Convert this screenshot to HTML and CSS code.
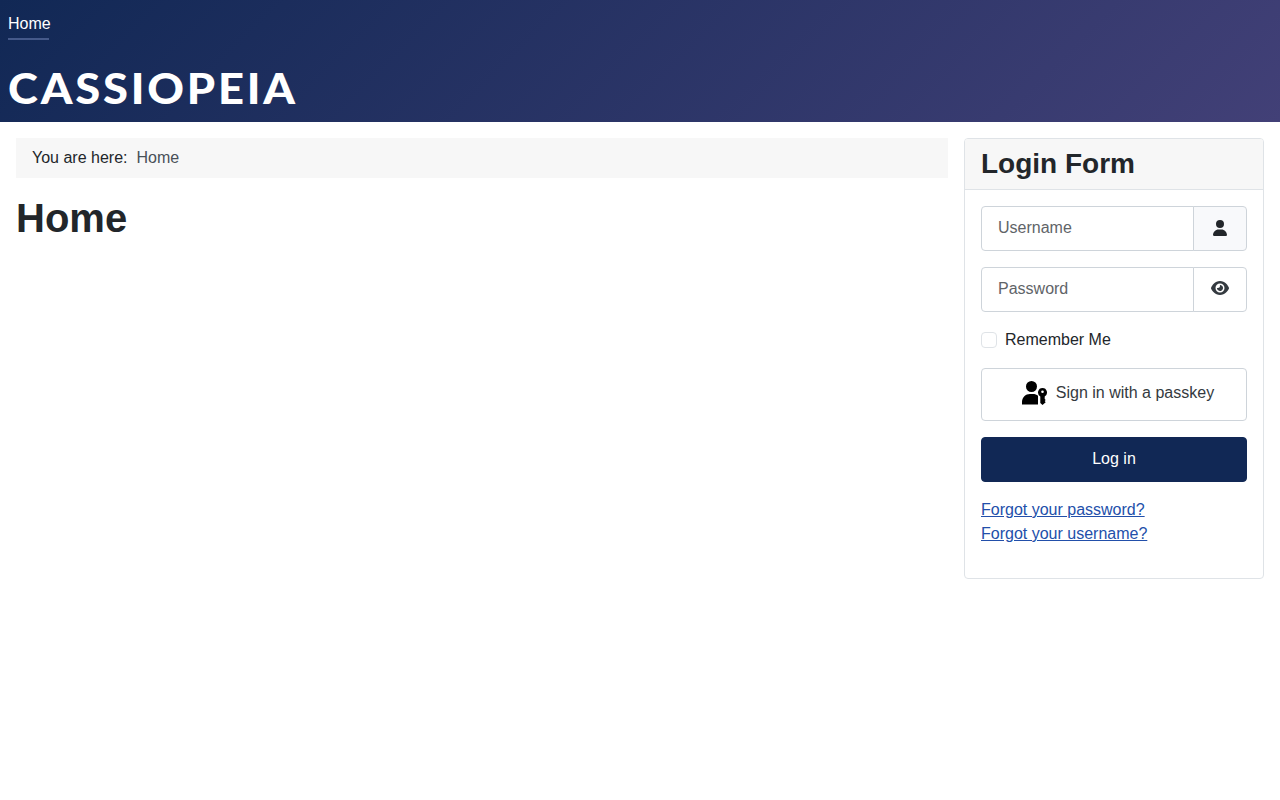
FILE: index.html
```html
<!DOCTYPE html>
<html lang="en">
<head>
    <meta charset="UTF-8">
    <meta name="viewport" content="width=device-width, initial-scale=1.0">
    <title>Home</title>
    <link rel="stylesheet" href="styles.css">
</head>
<body>
    <header class="header">
        <nav class="nav">
            <a class="nav-link" href="#">Home</a>
        </nav>
        <div class="brand"><a class="brand-logo" href="#">CASSIOPEIA</a></div>
    </header>

    <div class="site-grid">
        <main class="main">
            <div class="breadcrumbs">
                <span class="breadcrumbs-here">You are here:</span>
                <a class="breadcrumbs-link" href="#">Home</a>
            </div>
            <h1 class="page-title">Home</h1>
        </main>

        <aside class="card">
            <h3 class="card-header">Login Form</h3>
            <form class="card-body">
                <div class="input-group">
                    <input class="input" type="text" placeholder="Username">
                    <span class="input-addon">
                        <svg class="icon-user" viewBox="0 0 448 512"><path d="M224 256a128 128 0 1 0 0-256 128 128 0 1 0 0 256zm-45.700 48C79.800 304 0 383.800 0 482.300 0 498.700 13.300 512 29.700 512h388.600c16.400 0 29.700-13.300 29.700-29.700C448 383.800 368.200 304 269.700 304h-91.400z"/></svg>
                    </span>
                </div>
                <div class="input-group">
                    <input class="input" type="text" placeholder="Password">
                    <button class="input-addon input-addon-plain" type="button">
                        <svg class="icon-eye" viewBox="0 0 576 512"><path fill-rule="evenodd" d="M288 32C207 32 142 69 95 113 48 156 17 208 2 244c-3 8-3 17 0 25 15 36 46 88 93 131 47 44 112 80 193 80s146-36 193-80c47-43 78-95 93-131 3-8 3-17 0-25-15-36-46-88-93-131C434 69 369 32 288 32zM144 256a144 144 0 1 1 288 0 144 144 0 1 1-288 0zm144-64c0 35-29 64-64 64-7 0-14-1-20-3-6-2-12 2-12 8 0 7 1 14 3 21 14 51 67 82 118 68s82-67 68-118c-11-42-48-69-89-71-6 0-9 6-7 12 2 6 3 12 3 19z"/></svg>
                    </button>
                </div>
                <label class="remember">
                    <input class="remember-check" type="checkbox">
                    Remember Me
                </label>
                <button class="btn-passkey" type="button">
                    <svg class="icon-passkey" viewBox="0 0 25 24"><circle cx="9.500" cy="5.500" r="5.500"/><path d="M0 23.500v-2.500C0 16.500 3.500 13 8 13h3c1.900 0 3.700.6 5 1.700v8.800z"/><path fill-rule="evenodd" d="M20.500 7a4.500 4.500 0 0 1 2.200 8.400V18l1 1-1 1 1 1.300-3.200 2.700-2.200-2.100v-6.500A4.500 4.500 0 0 1 20.500 7zm0 2.500a1.300 1.300 0 1 0 0 2.600 1.300 1.300 0 0 0 0-2.600z"/></svg>
                    <span>Sign in with a passkey</span>
                </button>
                <button class="btn-login" type="button">Log in</button>
                <ul class="links">
                    <li><a href="#">Forgot your password?</a></li>
                    <li><a href="#">Forgot your username?</a></li>
                </ul>
            </form>
        </aside>
    </div>
</body>
</html>
```

FILE: styles.css
```css
* {
    box-sizing: border-box;
}

body {
    margin: 0;
    font-family: "Liberation Sans", Arial, sans-serif;
    font-size: 16px;
    line-height: 24px;
    color: #22262a;
    background: #fff;
}

a {
    color: #224faa;
}

/* header */
.header {
    height: 122px;
    background: linear-gradient(135deg, #112855 0%, #424077 100%);
    color: #fff;
}

.nav {
    display: flex;
    height: 40px;
    padding: 12px 8px 0;
}

.nav-link {
    height: 28px;
    width: 41px;
    line-height: 24px;
    color: #fff;
    text-decoration: none;
    white-space: nowrap;
    border-bottom: 2px solid #45598a;
}

.brand {
    padding: 22px 8px 0;
}

.brand-logo {
    display: inline-block;
    font-family: Lato, sans-serif;
    font-weight: 900;
    font-size: 42px;
    line-height: 52px;
    letter-spacing: 2.6px;
    color: #fff;
    text-decoration: none;
    white-space: nowrap;
    transform: scaleX(1.078);
    transform-origin: left center;
}

/* grid */
.site-grid {
    display: grid;
    grid-template-columns: 1fr 300px;
    gap: 16px;
    align-items: start;
    padding: 16px 16px 0;
}

.breadcrumbs {
    display: flex;
    gap: 9px;
    height: 40px;
    padding: 8px 16px;
    background: #f7f7f7;
}

.breadcrumbs-link {
    color: #495057;
    text-decoration: none;
}

.page-title {
    margin: 16px 0 0;
    font-size: 40px;
    line-height: 48px;
    font-weight: 700;
}

/* card */
.card {
    height: 441px;
    border: 1px solid #dfe3e7;
    border-radius: 4px;
}

.card-header {
    margin: 0;
    height: 51px;
    padding: 8px 16px;
    font-size: 28px;
    line-height: 34px;
    font-weight: 700;
    background: #f7f7f7;
    border-bottom: 1px solid #dfe3e7;
    border-radius: 3px 3px 0 0;
}

.card-body {
    display: flex;
    flex-direction: column;
    padding: 16px;
}

.input-group {
    display: flex;
    height: 45px;
    margin-bottom: 16px;
}

.input {
    flex: 1;
    min-width: 0;
    padding: 0 16px 2px;
    font: inherit;
    border: 1px solid #ced4da;
    border-radius: 4px 0 0 4px;
    outline: none;
}

.input::placeholder {
    color: #5f6468;
    opacity: 1;
}

.input-addon {
    display: flex;
    justify-content: center;
    align-items: center;
    width: 54px;
    margin-left: -1px;
    padding-bottom: 2px;
    background: #f8f9fb;
    border: 1px solid #ced4da;
    border-radius: 0 4px 4px 0;
}

.input-addon-plain {
    padding: 0 0 3px;
    background: #fff;
}

.icon-user {
    width: 14px;
    height: 16px;
    fill: #22262a;
}

.icon-eye {
    width: 18px;
    height: 16px;
    fill: #343a40;
}

.remember {
    display: flex;
    align-items: center;
    gap: 8px;
    height: 24px;
    margin-bottom: 16px;
}

.remember-check {
    appearance: none;
    width: 16px;
    height: 16px;
    margin: 0;
    background: #fff;
    border: 1px solid #dfe3e7;
    border-radius: 4px;
}

.btn-passkey {
    display: flex;
    justify-content: center;
    align-items: center;
    gap: 9px;
    height: 53px;
    margin-bottom: 16px;
    padding: 0 0 3px 8px;
    font: inherit;
    color: #343a40;
    background: #fff;
    border: 1px solid #ced4da;
    border-radius: 4px;
}

.icon-passkey {
    width: 25px;
    height: 24px;
    fill: #000;
}

.btn-login {
    height: 45px;
    margin-bottom: 16px;
    padding: 0 0 2px;
    font: inherit;
    color: #fff;
    background: #112855;
    border: 1px solid #112855;
    border-radius: 4px;
}

.links {
    margin: 0;
    padding: 0;
    list-style: none;
}
```
